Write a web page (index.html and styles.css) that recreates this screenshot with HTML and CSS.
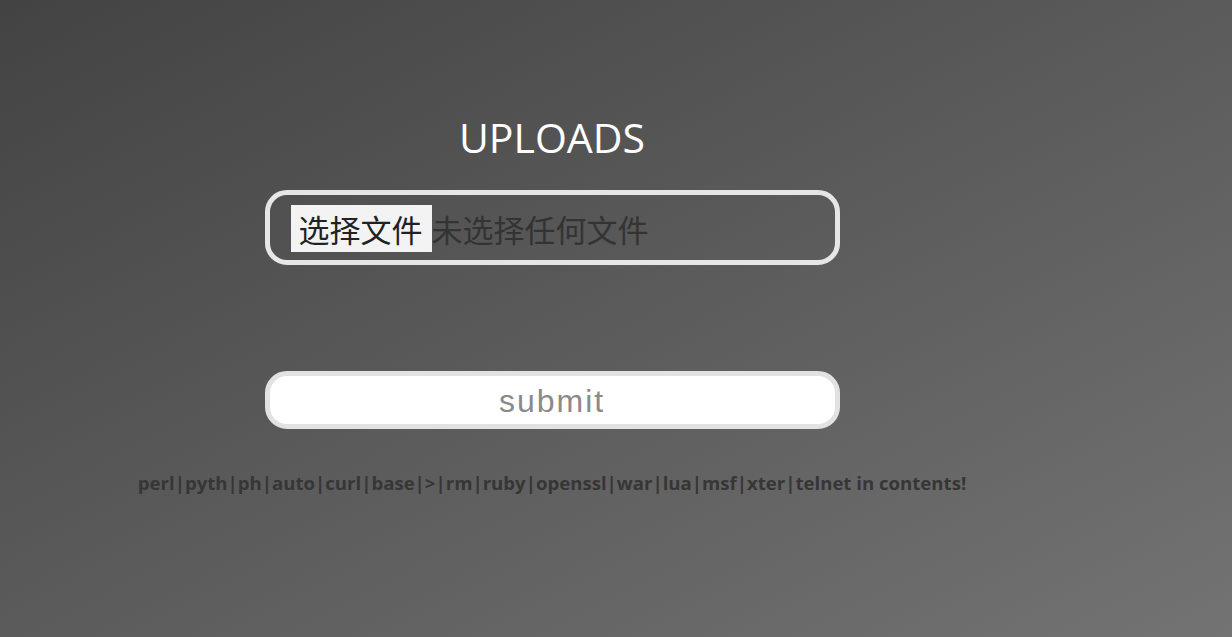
FILE: index.html
```html
<!DOCTYPE html>
<html lang="zh">
<head>
<meta charset="utf-8">
<title>UPLOADS</title>
<link rel="stylesheet" href="styles.css">
</head>
<body>
<div class="page">
  <form class="upload-form">
    <h1 class="title">UPLOADS</h1>
    <label class="file-box">
      <span class="file-btn">选择文件</span>
      <span class="file-name">未选择任何文件</span>
    </label>
    <button type="button" class="submit-btn">submit</button>
  </form>
  <p class="notice">perl|pyth|ph|auto|curl|base|&gt;|rm|ruby|openssl|war|lua|msf|xter|telnet in contents!</p>
</div>
</body>
</html>
```

FILE: styles.css
```css
html, body {
  margin: 0;
  padding: 0;
  height: 100%;
}
body {
  background: linear-gradient(to bottom right, #434343 0%, #5b5b5b 50%, #737373 100%);
  font-family: "Open Sans", "Noto Sans CJK SC", sans-serif;
  overflow: hidden;
}
.page {
  width: 1104px;
  display: flex;
  flex-direction: column;
  align-items: center;
  padding-top: 117px;
}
.upload-form {
  display: flex;
  flex-direction: column;
  align-items: center;
}
.title {
  margin: 0;
  font-size: 41px;
  line-height: 41px;
  font-weight: 400;
  color: #ffffff;
}
.file-box {
  margin-top: 32px;
  box-sizing: border-box;
  width: 575px;
  height: 75px;
  border: 5px solid #e6e6e6;
  border-radius: 22px;
  display: flex;
  align-items: flex-start;
  padding: 10px 0 0 21px;
}
.file-btn {
  box-sizing: border-box;
  height: 47px;
  padding: 0 9px 0 8px;
  background: #f3f3f3;
  color: #222;
  font-family: "Noto Sans CJK SC", sans-serif;
  font-size: 31px;
  line-height: 47px;
}
.file-name {
  height: 47px;
  color: #333;
  font-family: "Noto Sans CJK SC", sans-serif;
  font-size: 31px;
  line-height: 47px;
}
.submit-btn {
  margin-top: 106px;
  box-sizing: border-box;
  width: 575px;
  height: 58px;
  border: 5px solid #e2e2e2;
  border-radius: 22px;
  background: #ffffff;
  color: #8a8a8a;
  font-family: "Liberation Sans", Arial, sans-serif;
  font-size: 32px;
  letter-spacing: 2px;
  padding: 3px 0 0;
}
.notice {
  margin: 41px 0 0;
  font-size: 18.6px;
  font-weight: 700;
  color: #363636;
  white-space: nowrap;
}
```
